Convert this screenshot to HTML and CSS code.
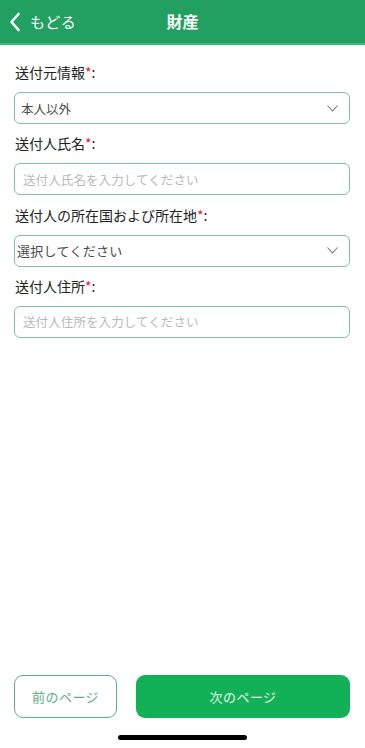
FILE: index.html
```html
<!DOCTYPE html>
<html lang="ja">
<head>
<meta charset="utf-8">
<title>財産</title>
<link rel="stylesheet" href="styles.css">
</head>
<body>
<div class="app">
  <header class="header">
    <div class="back">
      <svg class="back-icon" width="12" height="20" viewBox="0 0 12 20"><path d="M9.5 2 L2.5 10 L9.5 18" fill="none" stroke="#fff" stroke-width="2.6" stroke-linecap="round" stroke-linejoin="round"/></svg>
      <span class="back-text">もどる</span>
    </div>
    <h1 class="title">財産</h1>
  </header>
  <main class="form">
    <div class="field">
      <label class="label">送付元情報<span class="req">*</span>:</label>
      <div class="box select">
        <span class="value">本人以外</span>
        <svg class="chev" width="11" height="7" viewBox="0 0 11 7"><path d="M0.5 0.5 L5.5 6 L10.5 0.5" fill="none" stroke="#777" stroke-width="1.1"/></svg>
      </div>
    </div>
    <div class="field">
      <label class="label">送付人氏名<span class="req">*</span>:</label>
      <div class="box input"><span class="placeholder">送付人氏名を入力してください</span></div>
    </div>
    <div class="field">
      <label class="label">送付人の所在国および所在地<span class="req">*</span>:</label>
      <div class="box select">
        <span class="value value-select">選択してください</span>
        <svg class="chev" width="11" height="7" viewBox="0 0 11 7"><path d="M0.5 0.5 L5.5 6 L10.5 0.5" fill="none" stroke="#777" stroke-width="1.1"/></svg>
      </div>
    </div>
    <div class="field">
      <label class="label">送付人住所<span class="req">*</span>:</label>
      <div class="box input"><span class="placeholder">送付人住所を入力してください</span></div>
    </div>
  </main>
  <footer class="footer">
    <div class="buttons">
      <button class="btn btn-prev">前のページ</button>
      <button class="btn btn-next">次のページ</button>
    </div>
    <div class="home-bar"></div>
  </footer>
</div>
</body>
</html>
```
FILE: styles.css
```css
* { box-sizing: border-box; }
html, body { margin: 0; padding: 0; background: #fff; }
body {
  font-family: "Noto Sans CJK JP", "Noto Sans", sans-serif;
  color: #222;
}
.app {
  width: 365px;
  height: 748px;
  display: flex;
  flex-direction: column;
}
.header {
  height: 45px;
  background: #22a062;
  border-bottom: 2px solid #3fb97a;
  display: flex;
  align-items: center;
  justify-content: center;
  position: relative;
}
.back {
  position: absolute;
  left: 9px;
  top: 0;
  height: 43px;
  display: flex;
  align-items: center;
  gap: 9px;
}
.back-icon { display: block; }
.back-text {
  color: #fff;
  font-size: 15px;
  letter-spacing: 0.5px;
}
.title {
  margin: 0;
  color: #fff;
  font-size: 16px;
  font-weight: 700;
  margin-top: -2px;
}
.form {
  flex: 1;
  padding: 17px 15px 0 14px;
  display: flex;
  flex-direction: column;
  gap: 9.33px;
}
.field {
  display: flex;
  flex-direction: column;
  gap: 10px;
}
.label {
  font-size: 14px;
  line-height: 20px;
  color: #222;
  padding-left: 1px;
}
.req { color: #e0202a; }
.box {
  height: 32px;
  border: 1px solid #80c1a2;
  border-radius: 6px;
  display: flex;
  align-items: center;
}
.select { justify-content: space-between; padding: 0 10px 0 6px; }
.input { padding: 0 8px; }
.value { font-size: 12.5px; color: #4a4a4a; }
.value-select { font-size: 13px; letter-spacing: 0.3px; margin-left: -4px; }
.placeholder { font-size: 12.5px; color: #b9b9b9; letter-spacing: 0.1px; }
.chev { display: block; margin-right: 1px; }
.footer {
  padding: 0 15px 0 14px;
}
.buttons {
  display: flex;
  gap: 19px;
}
.btn {
  height: 43px;
  border-radius: 9px;
  font-family: "Noto Sans CJK JP", "Noto Sans", sans-serif;
  font-size: 13px;
  letter-spacing: 0.5px;
}
.btn-prev {
  width: 103px;
  background: #fff;
  border: 1px solid #5fae88;
  color: #5aaf83;
}
.btn-next {
  flex: 1;
  background: #13b157;
  border: none;
  color: #e6f6ec;
}
.home-bar {
  width: 129px;
  height: 5px;
  background: #000;
  border-radius: 3px;
  margin: 17px auto 8px;
}
```
